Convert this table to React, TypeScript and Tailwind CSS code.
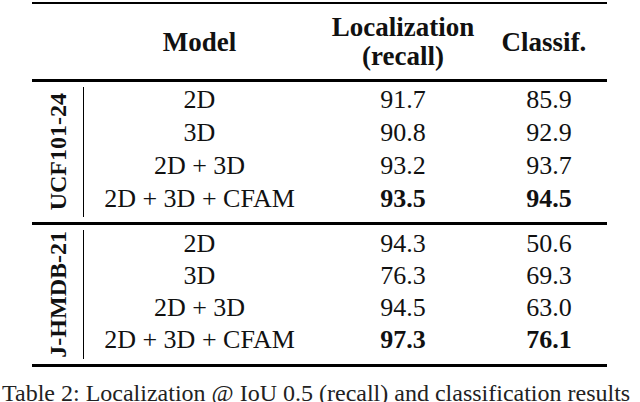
const serif = { fontFamily: '"Liberation Serif", "Times New Roman", serif' };

interface Row {
  model: string;
  loc: string;
  cls: string;
  best?: boolean;
}

const ucf: Row[] = [
  { model: '2D', loc: '91.7', cls: '85.9' },
  { model: '3D', loc: '90.8', cls: '92.9' },
  { model: '2D + 3D', loc: '93.2', cls: '93.7' },
  { model: '2D + 3D + CFAM', loc: '93.5', cls: '94.5', best: true },
];

const jhmdb: Row[] = [
  { model: '2D', loc: '94.3', cls: '50.6' },
  { model: '3D', loc: '76.3', cls: '69.3' },
  { model: '2D + 3D', loc: '94.5', cls: '63.0' },
  { model: '2D + 3D + CFAM', loc: '97.3', cls: '76.1', best: true },
];

function Section({ label, rows, rowClass, padClass }: { label: string; rows: Row[]; rowClass: string; padClass: string }) {
  return (
    <div className="flex h-full">
      <div className="w-[52px] flex items-center justify-center border-r border-black my-[5px]">
        <span className="font-bold text-[24px] leading-none [writing-mode:vertical-rl] rotate-180 whitespace-nowrap">
          {label}
        </span>
      </div>
      <div className={`flex-1 flex flex-col ${padClass}`}>
        {rows.map((r) => (
          <div key={r.model} className={`grid grid-cols-[231px_176px_116px] text-center text-[26px] ${rowClass}`}>
            <div>{r.model}</div>
            <div className={r.best ? 'font-bold' : ''}>{r.loc}</div>
            <div className={r.best ? 'font-bold' : ''}>{r.cls}</div>
          </div>
        ))}
      </div>
    </div>
  );
}

export default function App() {
  return (
    <div className="w-[640px] h-[402px] bg-white text-[#111] overflow-hidden" style={serif}>
      <div className="ml-[32px] w-[575px] pt-[2px]">
        <div className="h-[2px] bg-black" />
        <div className="h-[75px] grid grid-cols-[52px_231px_176px_116px] items-center text-center font-bold text-[27px]">
          <div />
          <div className="pt-[2px]">Model</div>
          <div className="leading-[29px]">
            Localization
            <br />
            (recall)
          </div>
          <div className="pr-[10px] pt-[2px]">Classif.</div>
        </div>
        <div className="h-[3px] bg-black" />
        <div className="h-[140px]">
          <Section label="UCF101-24" rows={ucf} rowClass="h-[33px] leading-[33px]" padClass="pt-[1px]" />
        </div>
        <div className="h-[3px] bg-black" />
        <div className="h-[139px]">
          <Section label="J-HMDB-21" rows={jhmdb} rowClass="h-[32px] leading-[32px]" padClass="pt-[3px]" />
        </div>
        <div className="h-[3px] bg-black" />
      </div>
      <div className="mt-[14px] pl-[2px] text-[24px] leading-[24px] whitespace-nowrap text-[#222]">
        Table 2: Localization @ IoU 0.5 (recall) and classification results
      </div>
    </div>
  );
}
